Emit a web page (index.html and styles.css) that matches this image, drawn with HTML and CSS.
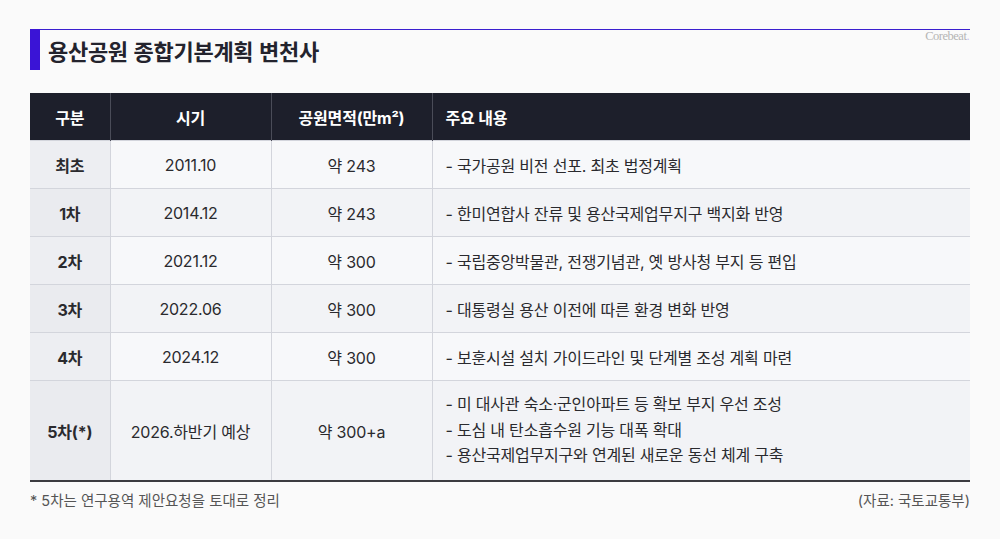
FILE: index.html
```html
<!DOCTYPE html>
<html lang="ko">
<head>
<meta charset="utf-8">
<link rel="stylesheet" href="styles.css">
</head>
<body>
<div class="page">
  <div class="head">
    <div class="bar"></div>
    <h1 class="title">용산공원 종합기본계획 변천사</h1>
    <div class="brand">Corebeat<span class="dot">.</span></div>
  </div>
  <table class="tbl">
    <colgroup>
      <col class="c1"><col class="c2"><col class="c3"><col class="c4">
    </colgroup>
    <thead>
      <tr><th>구분</th><th>시기</th><th>공원면적(만m²)</th><th class="left">주요 내용</th></tr>
    </thead>
    <tbody>
      <tr><td class="k">최초</td><td>2011.10</td><td>약 243</td><td class="left">- 국가공원 비전 선포. 최초 법정계획</td></tr>
      <tr><td class="k">1차</td><td>2014.12</td><td>약 243</td><td class="left">- 한미연합사 잔류 및 용산국제업무지구 백지화 반영</td></tr>
      <tr><td class="k">2차</td><td>2021.12</td><td>약 300</td><td class="left">- 국립중앙박물관, 전쟁기념관, 옛 방사청 부지 등 편입</td></tr>
      <tr><td class="k">3차</td><td>2022.06</td><td>약 300</td><td class="left">- 대통령실 용산 이전에 따른 환경 변화 반영</td></tr>
      <tr><td class="k">4차</td><td>2024.12</td><td>약 300</td><td class="left">- 보훈시설 설치 가이드라인 및 단계별 조성 계획 마련</td></tr>
      <tr class="tall"><td class="k">5차(*)</td><td>2026.하반기 예상</td><td>약 300+a</td><td class="left multi">- 미 대사관 숙소·군인아파트 등 확보 부지 우선 조성<br>- 도심 내 탄소흡수원 기능 대폭 확대<br>- 용산국제업무지구와 연계된 새로운 동선 체계 구축</td></tr>
    </tbody>
  </table>
  <div class="foot">
    <span>* 5차는 연구용역 제안요청을 토대로 정리</span>
    <span>(자료: 국토교통부)</span>
  </div>
</div>
</body>
</html>
```

FILE: styles.css
```css
html, body {
  margin: 0;
  padding: 0;
  background: #fafafa;
}
.page {
  padding: 29px 30px 0 30px;
  font-family: "Inter", "Noto Sans CJK KR", sans-serif;
  color: #222;
}
.head {
  display: flex;
  align-items: flex-start;
  border-top: 1px solid #3a1fcf;
  height: 41px;
}
.bar {
  width: 10px;
  height: 41px;
  margin-top: -1px;
  background: #3a14d6;
}
.title {
  margin: 0 0 0 8px;
  font-family: "Noto Sans CJK KR", sans-serif;
  font-size: 22px;
  line-height: 40px;
  font-weight: 700;
  color: #23232d;
  letter-spacing: -0.3px;
}
.brand {
  margin-left: auto;
  margin-top: 0;
  font-family: "Liberation Serif", serif;
  font-size: 12.5px;
  color: #b5b5b5;
  line-height: 13px;
  letter-spacing: -0.5px;
  margin-right: 1px;
}
.dot { color: #c9c2ef; }
.tbl {
  margin-top: 22px;
  width: 940px;
  border-collapse: collapse;
  table-layout: fixed;
  font-size: 16px;
  letter-spacing: -0.2px;
}
.c1 { width: 80px; }
.c2 { width: 161px; }
.c3 { width: 161px; }
.c4 { width: 538px; }
.tbl th {
  background: #1d1f2b;
  color: #fff;
  font-weight: 700;
  height: 47px;
  padding: 0;
  text-align: center;
  border-left: 1px solid #4a4c58;
}
.tbl th:first-child { border-left: none; }
.tbl td {
  height: 47px;
  padding: 0;
  text-align: center;
  color: #2a2a2e;
  border-left: 1px solid #d3d5dc;
  border-top: 1px solid #d3d5dc;
  background: #f7f8fa;
}
.tbl td:first-child { border-left: none; }
.tbl tbody tr:nth-child(even) td { background: #f2f3f6; }
.tbl td.k {
  background: #edeef2;
  font-weight: 700;
}
.tbl tbody tr:nth-child(even) td.k { background: #eaebef; }
.tbl th.left, .tbl td.left {
  text-align: left;
  padding-left: 13px;
}
.tbl tr.tall td {
  height: 99px;
  border-bottom: 2px solid #3c3c40;
}
.multi { line-height: 25.5px; }
.foot {
  display: flex;
  justify-content: space-between;
  margin-top: 7px;
  font-size: 14.5px;
  color: #555;
  letter-spacing: 0;
}
```
